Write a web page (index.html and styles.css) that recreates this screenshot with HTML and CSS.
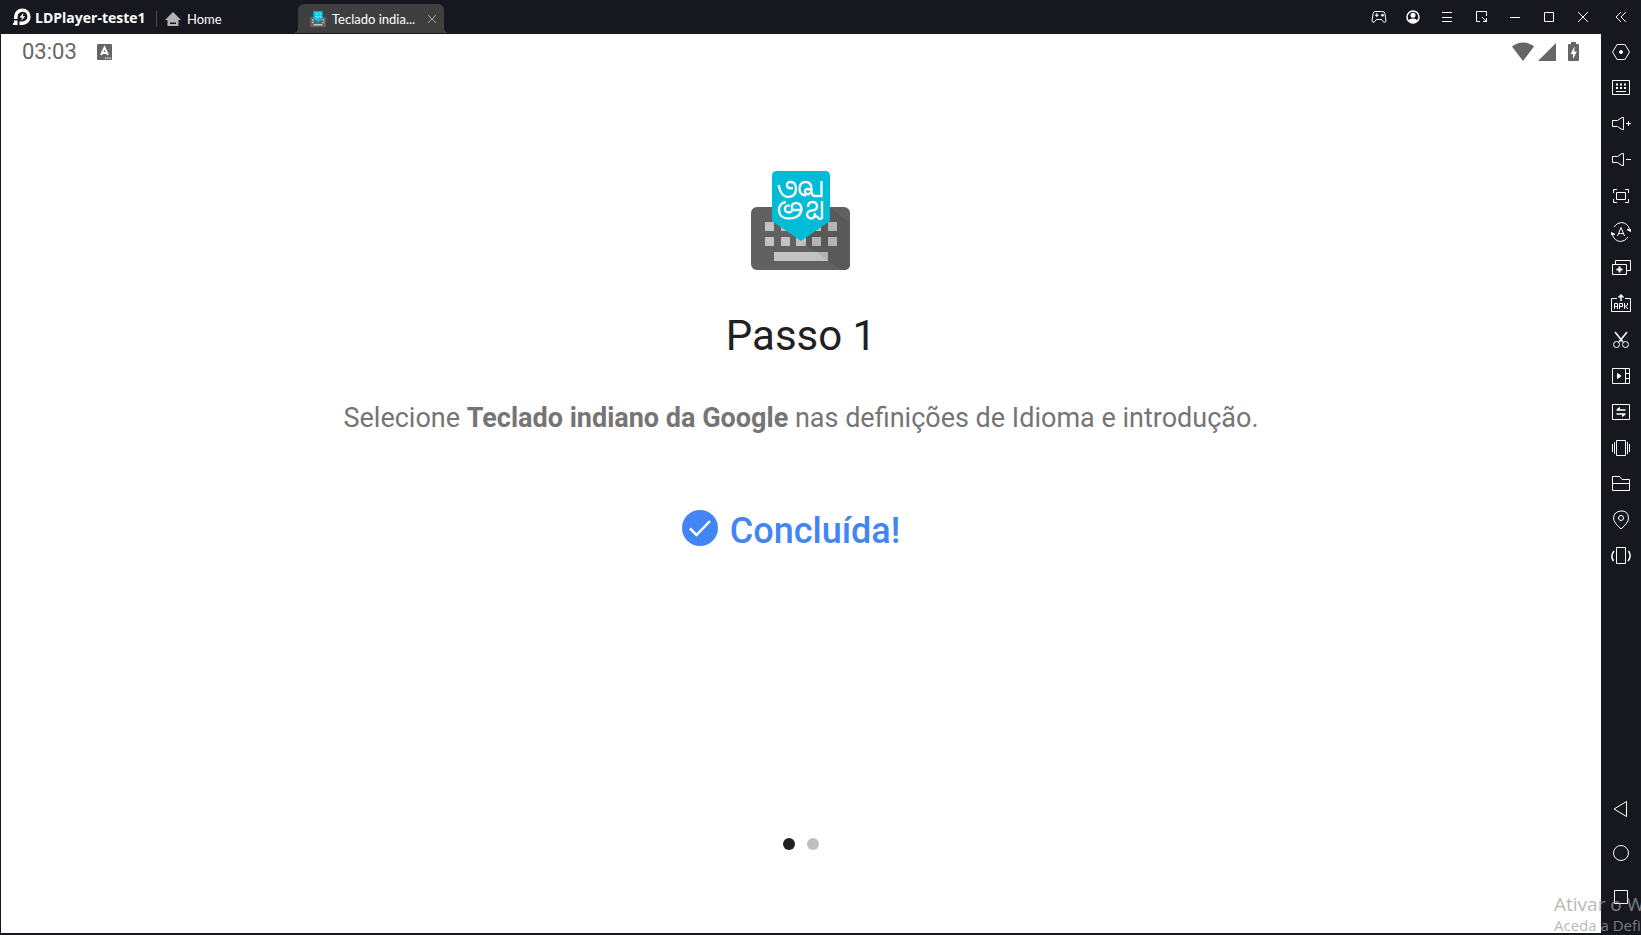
FILE: index.html
```html
<!DOCTYPE html>
<html lang="pt">
<head>
    <meta charset="UTF-8">
    <meta name="viewport" content="width=device-width, initial-scale=1.0">
    <title>LDPlayer-teste1</title>
    <link rel="stylesheet" href="styles.css">
</head>
<body>
  <header class="titlebar">
    <div class="brand">
      <svg width="18" height="18" viewBox="0 0 18 18">
        <path d="M1 11V8.5A8.3 8.3 0 1 1 9.5 17H6.500V13.500H9.500A4.900 4.900 0 1 0 4.600 8.700V11Z" fill="#fff"/>
        <path d="M10.500 4.800L6.500 9.500H9L8.300 12.800L12.300 8.200H9.800Z" fill="#fff"/>
        <path d="M1 12.500h3.500V17H0v-2h1Z" fill="#fff"/>
      </svg>
      <span>LDPlayer-teste1</span>
    </div>
    <nav class="tabs">
      <a class="tab home" href="#home">
        <svg width="16" height="16" viewBox="0 0 16 16">
          <path d="M8 1L16 9H13.500V15H2.500V9H0Z" fill="#b4b4b4"/>
          <path d="M5 11.500h6v1.500H5z" fill="#17171f"/>
        </svg>
        <span>Home</span>
      </a>
      <div class="tab active">
        <svg width="16" height="16" viewBox="0 0 100 100">
          <rect y="36" width="100" height="64" rx="6" fill="#616161"/>
          <path d="M12 52h10v9H12zM78 52h10v9H78zM12 67h10v9H12zM78 67h10v9H78zM22 81h56v10H22z" fill="#c4c4c4"/>
          <path d="M20 6q0-6 6-6h48q6 0 6 6v42L50 70L20 48z" fill="#00bcd7"/>
          <path d="M32 14h14v10H34M54 14h14v12M32 34h14v10H34M54 44V32h14v12" fill="none" stroke="#9be6f0" stroke-width="5"/>
        </svg>
        <span>Teclado india...</span>
        <button class="close" aria-label="Fechar separador">
          <svg width="10" height="10" viewBox="0 0 10 10"><path d="M1 1l8 8M9 1L1 9" stroke="#a0a0a0"/></svg>
        </button>
      </div>
    </nav>
    <div class="window-actions">
      <button aria-label="Gamepad">
        <svg class="line" width="16" height="14" viewBox="0 0 16 14">
          <path d="M4.500 1.500h7q2 0 2.400 2l1 6.500q.2 2-1 2.300q-1 .2-2-1L10.500 9.500h-5L4 11.300q-1 1.200-2 1Q.9 12 1.100 10l1-6.500q.4-2 2.400-2z"/>
          <path d="M3.800 5.200h4M5.800 3.200v4"/>
          <circle cx="11.500" cy="5.200" r="1" fill="#fff"/>
        </svg>
      </button>
      <button aria-label="Conta">
        <svg width="14" height="14" viewBox="0 0 14 14">
          <circle cx="7" cy="7" r="6" fill="none" stroke="#fff" stroke-width="1.500"/>
          <circle cx="7" cy="5.300" r="2.500" fill="#fff"/>
          <path d="M2.600 10.800Q3.500 8.500 7 8.500T11.400 10.800Q9.500 13 7 13T2.600 10.800z" fill="#fff"/>
        </svg>
      </button>
      <button aria-label="Menu">
        <svg class="line" width="10" height="10" viewBox="0 0 10 10"><path d="M0 .5h10M0 5.500h10M0 9.500h10"/></svg>
      </button>
      <button aria-label="Redimensionar">
        <svg class="line" width="12" height="12" viewBox="0 0 12 12"><path d="M5 10.500H1.500V.5h10V5M7 6l4.500 4.500M8 10.500h3.500V7"/></svg>
      </button>
      <button aria-label="Minimizar">
        <svg class="line" width="10" height="10" viewBox="0 0 10 10"><path d="M0 5.500h10"/></svg>
      </button>
      <button aria-label="Maximizar">
        <svg class="line" width="10" height="10" viewBox="0 0 10 10"><path d="M.5.500h9v9h-9z"/></svg>
      </button>
      <button aria-label="Fechar">
        <svg class="line" width="10" height="10" viewBox="0 0 10 10"><path d="M0 0l10 10M10 0L0 10"/></svg>
      </button>
    </div>
    <button class="collapse" aria-label="Recolher">
      <svg class="line" width="12" height="12" viewBox="0 0 12 12"><path d="M6 1L1 6l5 5M11 1L6 6l5 5"/></svg>
    </button>
  </header>

  <div class="workspace">
    <main class="screen">
      <div class="status">
        <span class="clock">03:03</span>
        <svg width="15" height="17" viewBox="0 0 15 17">
          <rect width="15" height="16" rx="1" fill="#666"/>
          <path d="M4 11L7.500 3.500L11 11M5 9h5" fill="none" stroke="#fff" stroke-width="1.800"/>
          <path d="M8 13.500h1.200v1.200H8zM10.300 13.500h1.200v1.200h-1.200zM12.600 13.500h1.200v1.200h-1.200z" fill="#fff"/>
        </svg>
        <div class="signals">
          <svg width="22" height="20" viewBox="0 0 22 20"><path d="M0 4.500Q5 .5 11 .5T22 4.500L11 19Z" fill="#666"/></svg>
          <svg width="18" height="20" viewBox="0 0 18 20"><path d="M18 1V19H0Z" fill="#666"/></svg>
          <svg class="battery" width="11" height="20" viewBox="0 0 11 20">
            <path d="M3 0h5v2h2q1 0 1 1v15q0 1-1 1H1q-1 0-1-1V3q0-1 1-1h2z" fill="#666"/>
            <path d="M6.500 4.500L2.500 12H5v5L8.800 9.500H6.200z" fill="#fff"/>
          </svg>
        </div>
      </div>

      <section class="setup">
        <svg width="100" height="100" viewBox="0 0 100 100">
          <rect y="36" width="99" height="63" rx="6" fill="#616161"/>
          <path d="M79 37L99 52V93Q99 99 93 99H90L50 70Z" fill="#595959"/>
          <path d="M14 51h9v9h-9zM30 51h9v9h-9zM61 51h9v9h-9zM77 51h9v9h-9zM14 66h9v9h-9zM30 66h9v9h-9zM45 66h10v9H45zM61 66h9v9h-9zM77 66h9v9h-9zM23 81h54v9H23z" fill="#c2c2c2"/>
          <path d="M50 70L55 73V75H54L50 70M61 66h9v9h-9zM77 66h9v9h-9zM77 51h9v9h-9zM66 81h11v9z" fill="#b4b4b4"/>
          <path d="M21 5q0-5 5-5h48q5 0 5 5v45L50 70L21 50z" fill="#00bcd7"/>
          <g fill="none" stroke="#f5f5f5" stroke-width="2.400">
            <path d="M27.500 14Q30 26 37 26Q45 25.500 45 18Q45 11 39.500 11Q35.500 11 36 15Q37 18 42 17"/>
            <path d="M55 24.500Q48.500 24 48.500 17.500Q49 11 54.500 11Q60.500 11 60.500 18V21Q61 25 64 25H70.500V10M60.500 19Q54 16.500 54 20.500Q54.500 24 58 23Q60 22 60.500 20"/>
            <path d="M35 31Q28 32 28 39.500Q28.500 47.500 38 47.500Q50 47 50.500 38Q50 32 45 32Q40.500 32 41 36.500Q42 41.500 37.500 41.500Q33.500 41 34 37Q35 33.500 39 35M41 39H50"/>
            <path d="M57 36Q57 31 61.500 31Q66 31 66 35.500Q66 39 61 39.500Q56 40 56 44Q57 47.500 60.500 47.500Q64 47 64 42M63 46.500Q65 44 67 46.500T71 47V30"/>
          </g>
        </svg>
        <h1>Passo 1</h1>
        <p>Selecione <strong>Teclado indiano da Google</strong> nas definições de Idioma e introdução.</p>
        <div class="done">
          <svg width="36" height="36" viewBox="0 0 36 36">
            <circle cx="18" cy="18" r="18" fill="#4285f4"/>
            <path d="M8 18.500L14.500 25L28 11" fill="none" stroke="#fff" stroke-width="2.500"/>
          </svg>
          <span>Concluída!</span>
        </div>
      </section>

      <div class="dots">
        <span class="dot current"></span>
        <span class="dot"></span>
      </div>
    </main>

    <aside class="sidebar">
      <div class="tools">
        <button aria-label="Definições">
          <svg class="line" width="20" height="20" viewBox="0 0 20 20"><path d="M6 2.500h8l4.500 7.500l-4.500 7.500H6L1.500 10z"/><circle cx="10" cy="10" r="1.500" fill="#fff"/></svg>
        </button>
        <button aria-label="Teclado">
          <svg class="line" width="20" height="20" viewBox="0 0 20 20"><path d="M1.500 2.500h17v14h-17z"/><path d="M5 6.500h2M9 6.500h2M13 6.500h2M5 10h2M9 10h2M13 10h2" stroke-width="2"/><path d="M5 13.500h10"/></svg>
        </button>
        <button aria-label="Aumentar volume">
          <svg class="line" width="20" height="20" viewBox="0 0 20 20"><path d="M1.500 6.500h5L11 3.500h1.500v12H11l-4.500-3h-5zM15 9.500h5M17.500 7v5"/></svg>
        </button>
        <button aria-label="Diminuir volume">
          <svg class="line" width="20" height="20" viewBox="0 0 20 20"><path d="M1.500 6.500h5L11 3.500h1.500v12H11l-4.500-3h-5zM15 9.500h5"/></svg>
        </button>
        <button aria-label="Ecrã inteiro">
          <svg class="line" width="20" height="20" viewBox="0 0 20 20"><path d="M5.500 6.500h9v7h-9zM2.500 7V3.500H6M14 3.500h3.500V7M17.500 13v3.500H14M6 16.500H2.500V13"/></svg>
        </button>
        <button aria-label="Rodar automaticamente">
          <svg class="line" width="20" height="20" viewBox="0 0 20 20"><path d="M3 5Q6 .5 10.500.5Q16.500 1 18.500 7M17 15Q14 19.500 9.500 19.500Q3.500 19 1.500 13M6.500 14L10 5.500L13.500 14M7.800 11.500h4.500"/><path d="M16 7.500h3.500V9.500zM4 12.500H.5V10.500z" fill="#fff"/></svg>
        </button>
        <button aria-label="Multi-instâncias">
          <svg class="line" width="20" height="20" viewBox="0 0 20 20"><path d="M1.500 6.500h14v10h-14zM4.500 6V2.500h15v10H16"/><path d="M8.500 8.500v6M5.500 11.500h6" stroke-width="2"/></svg>
        </button>
        <button aria-label="Instalar APK">
          <svg class="line" width="20" height="20" viewBox="0 0 20 20"><path d="M6 4.500H.5v13h19v-13H14"/><path d="M10 7V1M7.500 3.500L10 1L12.500 3.500" stroke-width="1.500"/><path d="M3.500 15v-5.500H6.500V15M3.500 12.500h3M8.500 15v-5.500h3v3h-3M13.500 9v6M16.500 9v2l-2.500 1.500l2.500 1.500v1"/></svg>
        </button>
        <button aria-label="Captura de ecrã">
          <svg class="line" width="20" height="20" viewBox="0 0 20 20"><path d="M4 2l8 10M16 2L8 12" stroke-width="1.500"/><circle cx="5.500" cy="14.500" r="3"/><circle cx="14.500" cy="14.500" r="3"/></svg>
        </button>
        <button aria-label="Gravar vídeo">
          <svg class="line" width="20" height="20" viewBox="0 0 20 20"><path d="M1.500 2.500h17v15h-17zM14.500 2.500v15M14.500 7.500h4M14.500 12.500h4"/><path d="M6.500 7.500v5L10 10z" fill="#fff"/></svg>
        </button>
        <button aria-label="Sincronizador">
          <svg class="line" width="20" height="20" viewBox="0 0 20 20"><path d="M1.500 2.500h17v15h-17z"/><path d="M5.500 8h9M5.500 12h9" stroke-width="1.500"/><path d="M8.500 5.500v2H6zM11.500 14.500v-2H14z" fill="#fff"/></svg>
        </button>
        <button aria-label="Agitar">
          <svg class="line" width="20" height="20" viewBox="0 0 20 20"><path d="M5.500 2.500h9v15h-9zM3.500 4v12M16.500 4v12M1.500 6v8M18.500 6v8"/></svg>
        </button>
        <button aria-label="Pasta partilhada">
          <svg class="line" width="20" height="20" viewBox="0 0 20 20"><path d="M1.500 16.500v-14h7l2.500 3h7.500v11zM1.500 9.500h17"/></svg>
        </button>
        <button aria-label="Localização">
          <svg class="line" width="20" height="20" viewBox="0 0 20 20"><path d="M10 19Q2.500 12.500 2.500 8Q3 1.500 10 1T17.500 8Q17.500 12.500 10 19z"/><circle cx="10" cy="8" r="2.500"/></svg>
        </button>
        <button aria-label="Rodar ecrã">
          <svg class="line" width="20" height="20" viewBox="0 0 20 20"><path d="M5.500 1.500h9v16h-9z"/><path d="M3 5Q-1 10 2.500 15M17 15Q21 10 17.500 5" stroke-width="1.500"/></svg>
        </button>
      </div>
      <div class="android-keys">
        <button aria-label="Voltar">
          <svg class="line" width="20" height="20" viewBox="0 0 20 20"><path d="M15.500 2.500v15L3 10z"/></svg>
        </button>
        <button aria-label="Início">
          <svg class="line" width="20" height="20" viewBox="0 0 20 20"><circle cx="10" cy="10" r="7.500"/></svg>
        </button>
        <button aria-label="Recentes">
          <svg class="line" width="20" height="20" viewBox="0 0 20 20"><path d="M3.500 3.500h13v13h-13z"/></svg>
        </button>
      </div>
    </aside>
  </div>

  <div class="watermark">
    <div class="watermark-title">Ativar o W</div>
    <div class="watermark-text">Aceda a Defi</div>
  </div>
</body>
</html>
```
FILE: styles.css
```css
* { margin: 0; padding: 0; box-sizing: border-box; }

body {
    position: relative;
    display: flex;
    flex-direction: column;
    height: 100vh;
    overflow: hidden;
    background-color: #17171f;
    font-family: Roboto, 'Noto Sans', sans-serif;
    color: #212121;
}

button {
    display: flex;
    align-items: center;
    justify-content: center;
    background: none;
    border: none;
    cursor: pointer;
}

svg {
    display: block;
    flex-shrink: 0;
}

/* Outline icons */
.line {
    fill: none;
    stroke: #fff;
    stroke-width: 1;
    overflow: visible;
}

/* Title bar */
.titlebar {
    display: flex;
    height: 34px;
    flex-shrink: 0;
    color: #fff;
}

.brand {
    display: flex;
    align-items: center;
    gap: 4px;
    width: 156px;
    padding-left: 13px;
    font-family: 'Open Sans', sans-serif;
    font-size: 14px;
    font-weight: 700;
    white-space: nowrap;
}

.tabs {
    display: flex;
    align-items: flex-end;
    flex: 1;
    padding-bottom: 1px;
}

.tab {
    position: relative;
    display: flex;
    align-items: center;
    gap: 6px;
    height: 29px;
    font-family: Lato, sans-serif;
    font-size: 13px;
    white-space: nowrap;
    color: #fff;
    text-decoration: none;
}

.home {
    width: 142px;
    padding-left: 9px;
}

.home::before {
    content: "";
    position: absolute;
    left: 0;
    top: 7px;
    width: 1px;
    height: 16px;
    background-color: #4a4a50;
}

.active {
    width: 146px;
    padding: 0 7px 0 12px;
    background-color: #3f3f3f;
    border-radius: 6px 6px 0 0;
}

/* Curved feet of the open tab */
.active::before,
.active::after {
    content: "";
    position: absolute;
    bottom: 0;
    width: 5px;
    height: 5px;
}

.active::before {
    left: -5px;
    background: radial-gradient(circle at 0 0, transparent 5px, #3f3f3f 5px);
}

.active::after {
    right: -5px;
    background: radial-gradient(circle at 100% 0, transparent 5px, #3f3f3f 5px);
}

.active span {
    flex: 1;
}

.close {
    width: 10px;
    height: 20px;
}

.window-actions {
    display: flex;
}

.window-actions button {
    width: 34px;
}

.collapse {
    width: 40px;
    margin-left: 1px;
}

/* Device area */
.workspace {
    display: flex;
    flex: 1;
    min-height: 0;
}

.screen {
    display: flex;
    flex-direction: column;
    flex: 1;
    margin: 0 0 2px 1px;
    background-color: #fff;
}

.status {
    display: flex;
    align-items: center;
    gap: 20px;
    height: 36px;
    padding: 0 22px 0 21px;
    color: #666;
}

.clock {
    font-size: 22px;
    line-height: 36px;
}

.signals {
    display: flex;
    gap: 4px;
    margin-left: auto;
}

.battery {
    margin-left: 8px;
}

.setup {
    display: flex;
    flex-direction: column;
    align-items: center;
    flex: 1;
    padding-top: 101px;
}

.setup h1 {
    margin-top: 40px;
    font-size: 42px;
    font-weight: 400;
    line-height: 50px;
}

.setup p {
    margin-top: 40px;
    font-size: 27px;
    line-height: 34px;
    color: #757575;
    text-align: center;
}

.done {
    display: flex;
    align-items: flex-start;
    gap: 12px;
    margin-top: 75px;
    padding-right: 20px;
    font-size: 36px;
    font-weight: 500;
    line-height: 42px;
    color: #4285f4;
}

.dots {
    display: flex;
    justify-content: center;
    gap: 12px;
    padding-bottom: 83px;
}

.dot {
    width: 12px;
    height: 12px;
    border-radius: 50%;
    background-color: #c0c0c0;
}

.dot.current {
    background-color: #212121;
}

/* Emulator tools */
.sidebar {
    display: flex;
    flex-direction: column;
    justify-content: space-between;
    width: 40px;
    padding-bottom: 16px;
}

.sidebar button {
    width: 40px;
    height: 36px;
}

.android-keys button {
    height: 44px;
}

/* System activation notice over the corner */
.watermark {
    position: absolute;
    right: 0;
    bottom: 0;
    width: 87px;
    height: 43px;
    overflow: hidden;
    font-family: 'Open Sans', sans-serif;
    color: rgba(160, 160, 160, 0.75);
    white-space: nowrap;
    pointer-events: none;
}

.watermark-title {
    font-size: 19px;
    line-height: 24px;
}

.watermark-text {
    font-size: 15px;
    line-height: 18px;
}
```
